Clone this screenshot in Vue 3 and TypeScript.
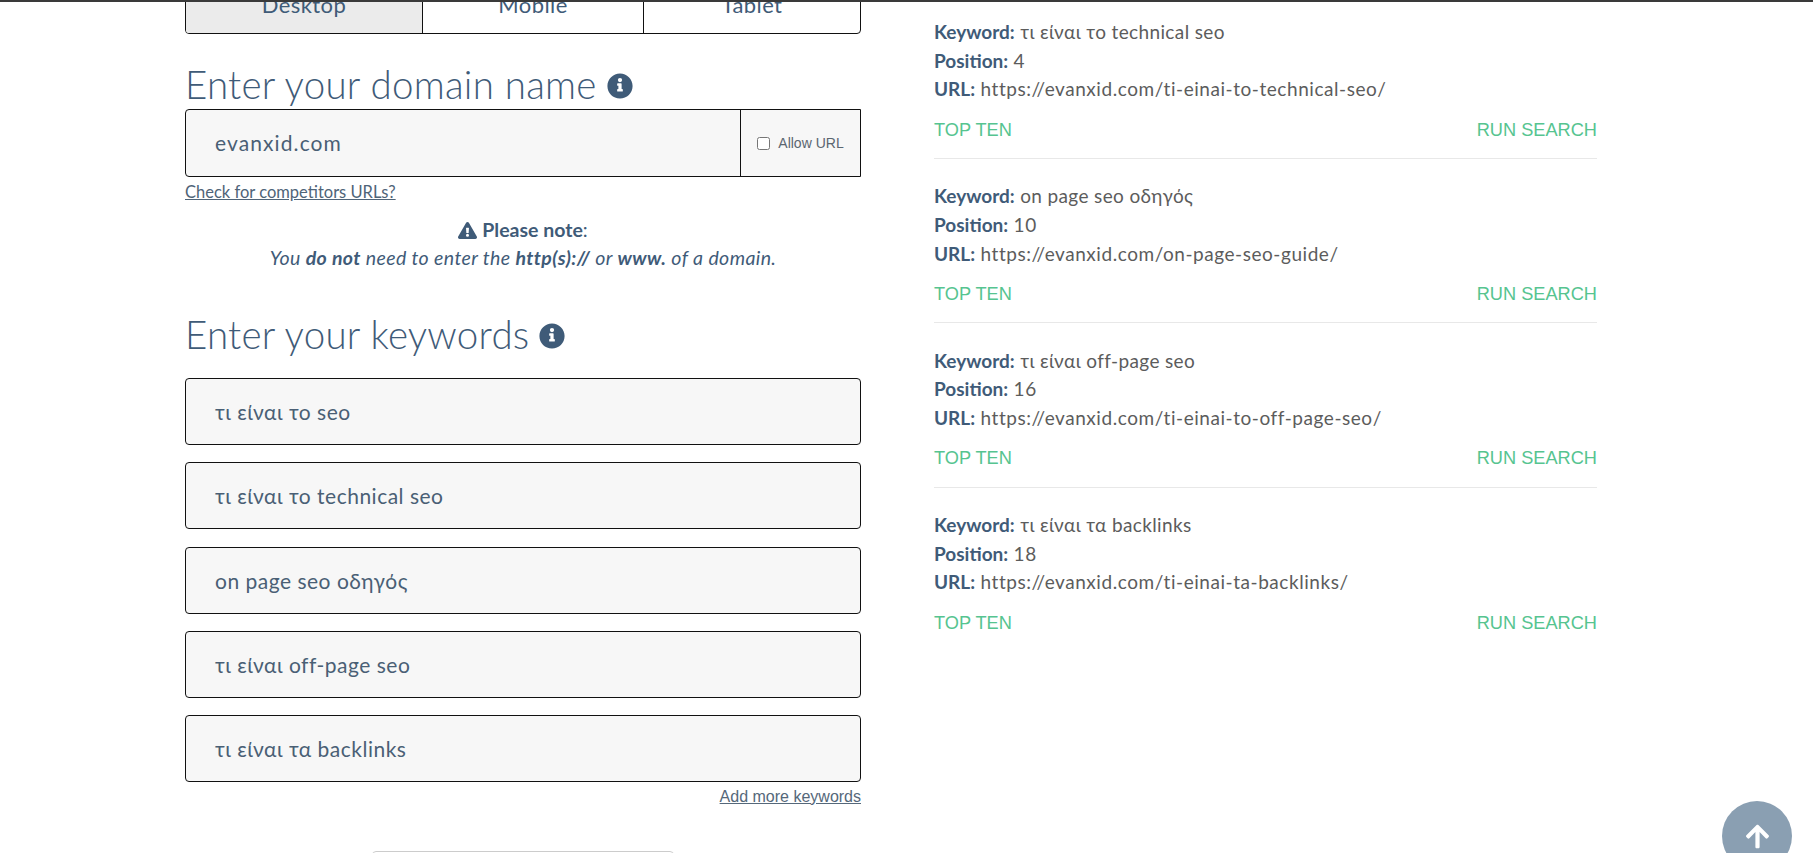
<script setup lang="ts">
const keywords: string[] = ['τι είναι το seo', 'τι είναι το technical seo', 'on page seo οδηγός', 'τι είναι off-page seo', 'τι είναι τα backlinks']
const results = [
  { keyword: 'τι είναι το technical seo', position: 4, url: 'https://evanxid.com/ti-einai-to-technical-seo/' },
  { keyword: 'on page seo οδηγός', position: 10, url: 'https://evanxid.com/on-page-seo-guide/' },
  { keyword: 'τι είναι off-page seo', position: 16, url: 'https://evanxid.com/ti-einai-to-off-page-seo/' },
  { keyword: 'τι είναι τα backlinks', position: 18, url: 'https://evanxid.com/ti-einai-ta-backlinks/' },
]
</script>

<template>
  <div class="viewport">
    <div class="topline"></div>
    <main class="page">
      <section class="left">
        <div class="tabs">
          <div class="tab active">Desktop</div>
          <div class="tab">Mobile</div>
          <div class="tab">Tablet</div>
        </div>

        <h2 class="title first">Enter your domain name
          <svg class="info" viewBox="0 0 512 512"><path d="M256 8C119 8 8 119 8 256s111 248 248 248 248-111 248-248S393 8 256 8zm0 90a42 42 0 1 1 0 84 42 42 0 0 1 0-84zm56 254c0 7-5 12-12 12h-88c-7 0-12-5-12-12v-24c0-7 5-12 12-12h12v-64h-12c-7 0-12-5-12-12v-24c0-7 5-12 12-12h64c7 0 12 5 12 12v100h12c7 0 12 5 12 12z"/></svg>
        </h2>
        <div class="domain">
          <div class="domain-value">evanxid.com</div>
          <label class="allow"><input type="checkbox" /> <span>Allow URL</span></label>
        </div>
        <a class="competitors">Check for competitors URLs?</a>

        <div class="note">
          <p class="note-head">
            <svg class="warn" viewBox="0 0 576 512"><path d="M570 440c18 32-5 72-42 72H48c-37 0-60-40-42-72L246 24c18-32 66-32 84 0zM288 354a46 46 0 1 0 0 92 46 46 0 0 0 0-92zm-44-166 8 136c0 6 5 11 12 11h48c7 0 12-5 12-11l8-136c0-7-5-13-12-13h-64c-7 0-12 6-12 13z"/></svg>
            <span><b>Please note</b>:</span>
          </p>
          <p class="note-body">You <b>do not</b> need to enter the <b>http(s)://</b> or <b>www.</b> of a domain.</p>
        </div>

        <h2 class="title second">Enter your keywords
          <svg class="info" viewBox="0 0 512 512"><path d="M256 8C119 8 8 119 8 256s111 248 248 248 248-111 248-248S393 8 256 8zm0 90a42 42 0 1 1 0 84 42 42 0 0 1 0-84zm56 254c0 7-5 12-12 12h-88c-7 0-12-5-12-12v-24c0-7 5-12 12-12h12v-64h-12c-7 0-12-5-12-12v-24c0-7 5-12 12-12h64c7 0 12 5 12 12v100h12c7 0 12 5 12 12z"/></svg>
        </h2>
        <div class="keywords">
          <div v-for="k in keywords" :key="k" class="kw">{{ k }}</div>
        </div>
        <div class="more-row"><a class="more">Add more keywords</a></div>
        <div class="submit"></div>
      </section>

      <section class="right">
        <article v-for="r in results" :key="r.url" class="result">
          <p><b>Keyword:</b> <span class="kw-text">{{ r.keyword }}</span></p>
          <p><b>Position:</b> {{ r.position }}</p>
          <p><b>URL:</b> {{ r.url }}</p>
          <div class="actions"><a>TOP TEN</a><a>RUN SEARCH</a></div>
        </article>
      </section>
    </main>
    <button class="totop" aria-label="Back to top">
      <svg viewBox="0 0 448 512"><path d="m34.9 289.5-22.2-22.2c-9.4-9.4-9.4-24.6 0-33.9L207 39c9.4-9.4 24.6-9.4 33.9 0l194.3 194.3c9.4 9.4 9.4 24.6 0 33.9L413 289.4c-9.5 9.5-25 9.3-34.3-.4L264 168.6V456c0 13.3-10.7 24-24 24h-32c-13.3 0-24-10.7-24-24V168.6L69.2 289.1c-9.3 9.8-24.8 10-34.3.4z"/></svg>
    </button>
  </div>
</template>

<style>
html, body { margin: 0; height: 853px; overflow: hidden; background: #fff; }
</style>

<style scoped>
.viewport {
  position: relative;
  height: 853px;
  overflow: hidden;
  font-family: "Lato", "Noto Sans", sans-serif;
  color: #3f5b78;
}
.topline { position: absolute; top: 0; left: 0; right: 0; height: 2px; background: #3a3a3a; z-index: 2; }
.page {
  display: grid;
  grid-template-columns: 676px 663px;
  column-gap: 73px;
  padding-left: 185px;
  margin-top: -28px;
}
.tabs {
  display: grid;
  grid-template-columns: 236px 221px 1fr;
  height: 62px;
  box-sizing: border-box;
  border: 1px solid #111;
  border-radius: 4px;
  overflow: hidden;
}
.tab {
  display: flex;
  align-items: center;
  justify-content: center;
  font-size: 22px;
  letter-spacing: 0.4px;
  border-left: 1px solid #111;
  padding-top: 3px;
  box-sizing: border-box;
}
.tab:first-child { border-left: 0; }
.tab.active { background: #ebebeb; }
.title {
  margin: 0;
  font-size: 38.5px;
  font-weight: 300;
  letter-spacing: 0.25px;
  line-height: 48px;
  display: flex;
  align-items: center;
  gap: 10px;
  white-space: nowrap;
}
.first { margin-top: 26px; }
.second { margin-top: 38px; }
.info { width: 26px; height: 26px; fill: #3f5b78; margin-top: 4px; }
.domain {
  margin-top: 1px;
  display: flex;
  height: 68px;
  box-sizing: border-box;
  border: 1px solid #111;
  border-radius: 4px 0 0 4px;
  background: #f7f7f7;
}
.domain-value {
  flex: 1;
  display: flex;
  align-items: center;
  padding-left: 29px;
  padding-bottom: 2px;
  font-size: 21px;
  letter-spacing: 1.1px;
  border-right: 1px solid #111;
  color: #4a5f75;
}
.allow {
  flex: 0 0 119px;
  display: flex;
  align-items: center;
  justify-content: center;
  gap: 8px;
  font: 14px "Liberation Sans", sans-serif;
  color: #5b6670;
}
.allow input { margin: 0; width: 13px; height: 13px; }
.competitors {
  display: block;
  margin-top: 5px;
  font-size: 16.5px;
  line-height: 20px;
  text-decoration: underline;
  color: #4f6478;
}
.note { margin-top: 14px; text-align: center; font-size: 19.5px; line-height: 28px; }
.note p { margin: 0; }
.note-head { display: flex; justify-content: center; align-items: center; gap: 5px; }
.warn { width: 19px; height: 17px; fill: #3f5b78; }
.note-body { font-style: italic; letter-spacing: 0.4px; }
.keywords { margin-top: 20px; display: grid; row-gap: 17.25px; }
.kw {
  height: 67px;
  box-sizing: border-box;
  display: flex;
  align-items: center;
  padding-left: 29px;
  border: 1px solid #111;
  border-radius: 4px;
  background: #f7f7f7;
  font-size: 21px;
  letter-spacing: 0.5px;
  color: #4a5f75;
}
.more-row { display: flex; justify-content: flex-end; margin-top: 6px; }
.more {
  font: 16px/18px "Liberation Sans", sans-serif;
  text-decoration: underline;
  color: #55687a;
}
.submit {
  margin: 45px auto 0;
  width: 302px;
  height: 50px;
  box-sizing: border-box;
  border: 1px solid #ccc;
  border-radius: 4px;
}
.right { padding-top: 46px; }
.result { height: 141px; margin-bottom: 23.3px; box-sizing: border-box; border-bottom: 1px solid #e8e8e8; }
.result:last-child { border-bottom: 0; }
.result p { margin: 0; font-size: 19px; line-height: 28.7px; color: #5c5c5c; letter-spacing: 0.55px; }
.result b { color: #3f5b78; font-weight: 700; letter-spacing: 0; }
.kw-text { letter-spacing: 0.37px; }
.actions {
  margin-top: 13.5px;
  display: flex;
  justify-content: space-between;
  font: 18.2px/24px "Liberation Sans", sans-serif;
  color: #56c490;
}
.totop {
  position: absolute;
  left: 1722px;
  top: 801px;
  width: 70px;
  height: 70px;
  padding: 0;
  border: 0;
  border-radius: 50%;
  background: #8a9fb2;
  display: flex;
  align-items: center;
  justify-content: center;
}
.totop svg { width: 27px; height: 27px; fill: #fff; }
</style>
